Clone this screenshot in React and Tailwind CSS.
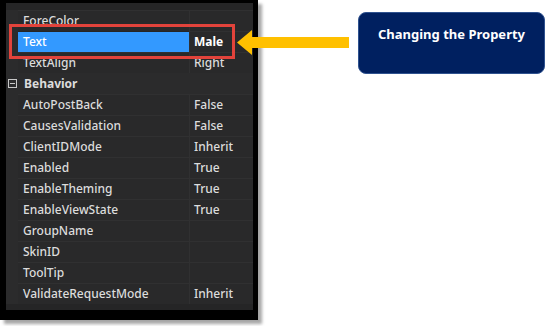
export default function App() {
  // Property grid rows
  const rows = [
    { name: "ForeColor", value: "" },
    { name: "Text", value: "Male", selected: true },
    { name: "TextAlign", value: "Right" },
    { category: "Behavior" },
    { name: "AutoPostBack", value: "False" },
    { name: "CausesValidation", value: "False" },
    { name: "ClientIDMode", value: "Inherit" },
    { name: "Enabled", value: "True" },
    { name: "EnableTheming", value: "True" },
    { name: "EnableViewState", value: "True" },
    { name: "GroupName", value: "" },
    { name: "SkinID", value: "" },
    { name: "ToolTip", value: "" },
    { name: "ValidateRequestMode", value: "Inherit" },
  ];

  return (
    <div
      className="relative w-[549px] h-[326px] bg-white flex items-start overflow-hidden"
      style={{ fontFamily: '"Noto Sans", "Open Sans", sans-serif' }}
    >
      {/* Property panel with black frame and drop shadow */}
      <div className="w-[258px] h-[320px] bg-black pl-[6px] pt-[3px] pr-[5px] pb-[10px] shadow-[4px_4px_3px_rgba(0,0,0,0.35)] shrink-0">
        <div className="h-full bg-[#252526] pt-[7px] text-[12px] font-medium text-[#dcdcdc]">
          {rows.map((row) =>
            row.category ? (
              <div key={row.category} className="flex items-center h-[21px] bg-[#2b2b2c]">
                <div className="w-[12px] flex justify-center">
                  <span className="w-[9px] h-[9px] border border-[#c8c8c8] flex items-center justify-center">
                    <span className="w-[5px] h-px bg-[#c8c8c8]" />
                  </span>
                </div>
                <span className="pl-[6px] font-bold">{row.category}</span>
              </div>
            ) : (
              <div key={row.name} className="flex h-[21px]">
                <div className="w-[12px] bg-[#2b2b2c]" />
                <div
                  className={
                    row.selected
                      ? "w-[171px] pl-[5px] flex items-center bg-[#3399ff] text-white border-t border-[#252526]"
                      : "w-[171px] pl-[5px] flex items-center bg-[#29292a] border-t border-[#303031]"
                  }
                >
                  {row.name}
                </div>
                <div
                  className={
                    row.selected
                      ? "flex-1 pl-[4px] flex items-center bg-[#29292a] border-t border-l border-[#303031] font-bold text-white"
                      : "flex-1 pl-[4px] flex items-center bg-[#29292a] border-t border-l border-[#303031]"
                  }
                >
                  {row.value}
                </div>
              </div>
            )
          )}
        </div>
      </div>

      {/* Red highlight box around the Text row */}
      <div className="absolute left-[9px] top-[24px] w-[226px] h-[35px] border-[3px] border-[#e2433b]" />

      {/* Yellow arrow pointing at the property */}
      <svg className="absolute left-[237px] top-[30px]" width="113" height="25" viewBox="0 0 113 25">
        <polygon points="0,12.5 15,0 15,7 112,7 112,18 15,18 15,25" fill="#ffc000" />
      </svg>

      {/* Callout box */}
      <div className="ml-[100px] mt-[12px] w-[187px] h-[62px] rounded-[8px] bg-[#002060] border border-[#2f528f] flex justify-center pt-[15px]">
        <span className="text-white font-bold text-[13px] leading-none">Changing the Property</span>
      </div>
    </div>
  );
}
